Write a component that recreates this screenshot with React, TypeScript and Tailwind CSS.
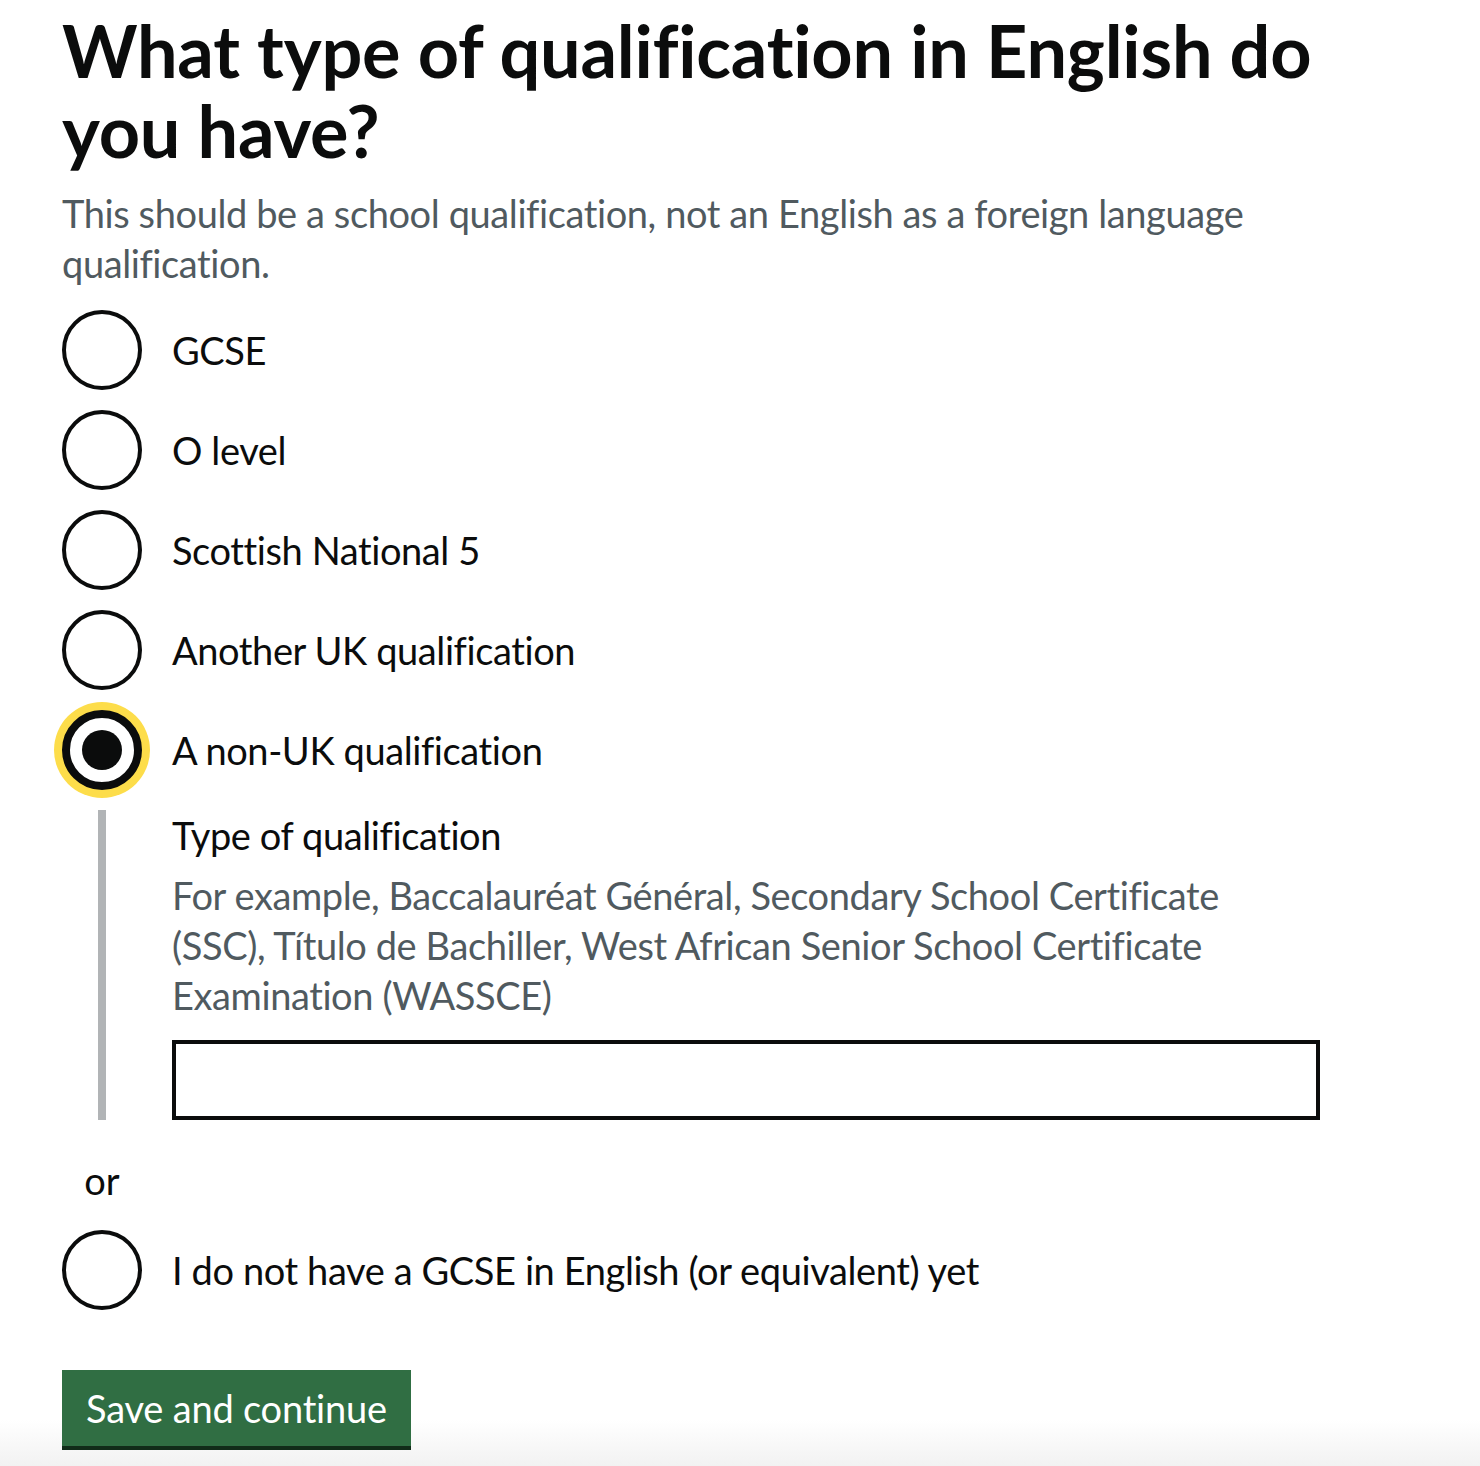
import React from "react";

const options = ["GCSE", "O level", "Scottish National 5", "Another UK qualification"];

function Radio({ label, checked = false }: { label: string; checked?: boolean }) {
  return (
    <div className="flex items-start mb-5">
      {checked ? (
        <span className="relative w-20 h-20 shrink-0 rounded-full border-[8px] border-[#0b0c0c] shadow-[0_0_0_8px_#fddd4a] flex items-center justify-center bg-white">
          <span className="w-10 h-10 rounded-full bg-[#0b0c0c]" />
        </span>
      ) : (
        <span className="w-20 h-20 shrink-0 rounded-full border-4 border-[#0b0c0c] bg-white" />
      )}
      <span className="pl-[30px] pt-[15px] text-[38px] leading-[50px] tracking-[-0.4px] text-[#0b0c0c]">{label}</span>
    </div>
  );
}

export default function App() {
  return (
    <div
      className="min-h-[1466px] bg-[linear-gradient(to_bottom,#ffffff_1420px,#f2f2f2_1466px)] pl-[62px] pt-[10px] [font-variant-ligatures:none]"
      style={{ fontFamily: 'Lato, Arial, sans-serif' }}
    >
      <h1 className="text-[72px] leading-[80px] font-bold text-[#0b0c0c] tracking-[-0.2px] w-[1300px] mb-[18px]">
        What type of qualification in English do you have?
      </h1>
      <p className="text-[38px] leading-[50px] tracking-[-0.4px] text-[#505a5f] w-[1220px] mb-[22px]">
        This should be a school qualification, not an English as a foreign language qualification.
      </p>

      {options.map((o) => (
        <Radio key={o} label={o} />
      ))}
      <Radio label="A non-UK qualification" checked />

      {/* conditional reveal */}
      <div className="ml-9 border-l-8 border-[#b1b4b6] pl-[66px] mb-[35px]">
        <label className="block text-[38px] leading-[50px] tracking-[-0.4px] text-[#0b0c0c] mb-[10px]">Type of qualification</label>
        <p className="text-[38px] leading-[50px] tracking-[-0.4px] text-[#505a5f] w-[1100px] mb-5">
          For example, Baccalauréat Général, Secondary School Certificate (SSC), Título de Bachiller, West African Senior School Certificate Examination (WASSCE)
        </p>
        <input type="text" className="block w-[1148px] h-20 border-4 border-[#0b0c0c] bg-white outline-none" />
      </div>

      <div className="w-20 text-center text-[38px] leading-[50px] text-[#0b0c0c] mb-[25px]">or</div>

      <Radio label="I do not have a GCSE in English (or equivalent) yet" />

      <button className="mt-10 bg-[#306e43] text-white text-[38px] leading-[46px] tracking-[-0.2px] px-6 pt-[15px] pb-[15px] shadow-[0_4px_0_#112c19]">
        Save and continue
      </button>
    </div>
  );
}
